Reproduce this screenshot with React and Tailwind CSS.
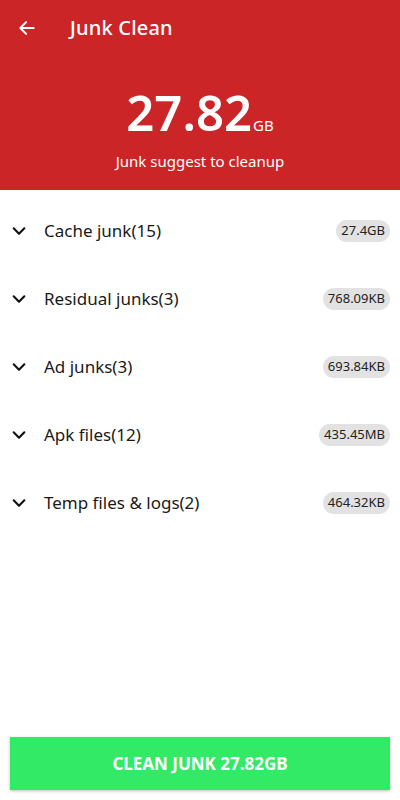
const items = [
  { name: 'Cache junk(15)', size: '27.4GB' },
  { name: 'Residual junks(3)', size: '768.09KB' },
  { name: 'Ad junks(3)', size: '693.84KB' },
  { name: 'Apk files(12)', size: '435.45MB' },
  { name: 'Temp files & logs(2)', size: '464.32KB' },
]

function Chevron() {
  return (
    <svg width="16" height="16" viewBox="0 0 24 24" fill="none" stroke="#111" strokeWidth="3.2" strokeLinecap="round" strokeLinejoin="round">
      <path d="M4 8l8 8 8-8" />
    </svg>
  )
}

export default function App() {
  return (
    <div className="w-[400px] h-[800px] bg-white flex flex-col" style={{ fontFamily: '"Noto Sans", Inter, sans-serif' }}>
      <div className="bg-[#cc2527] h-[190px] flex flex-col text-white">
        <div className="h-[56px] flex items-center pl-[17px]">
          <svg width="20" height="20" viewBox="0 0 24 24" fill="none" stroke="white" strokeWidth="2.4" strokeLinecap="round" strokeLinejoin="round">
            <path d="M20 12H4M11 5l-7 7 7 7" />
          </svg>
          <span className="ml-[33px] text-[20px] font-medium tracking-[0.2px]">Junk Clean</span>
        </div>
        <div className="flex flex-col items-center mt-[32px]">
          <div className="flex items-baseline">
            <span className="text-[49px] font-semibold leading-none">27.82</span>
            <span className="text-[15px] ml-[1px]">GB</span>
          </div>
          <div className="text-[15px] mt-[13px]">Junk suggest to cleanup</div>
        </div>
      </div>
      <div className="flex flex-col pt-[7px]">
        {items.map((it) => (
          <div key={it.name} className="h-[68px] flex items-center pl-[11px] pr-[10px]">
            <Chevron />
            <span className="ml-[17px] text-[17px] text-[#1a1a1a] flex-1">{it.name}</span>
            <span className="bg-[#e2e2e2] rounded-full px-[5px] h-[22px] flex items-center text-[13px] text-[#222]">{it.size}</span>
          </div>
        ))}
      </div>
      <div className="flex-1" />
      <div className="px-[10px] pb-[10px]">
        <div className="h-[53px] bg-[#33ea66] shadow-[0_1px_3px_rgba(0,0,0,0.25)] flex items-center justify-center text-white font-bold text-[17px]">
          CLEAN JUNK 27.82GB
        </div>
      </div>
    </div>
  )
}
